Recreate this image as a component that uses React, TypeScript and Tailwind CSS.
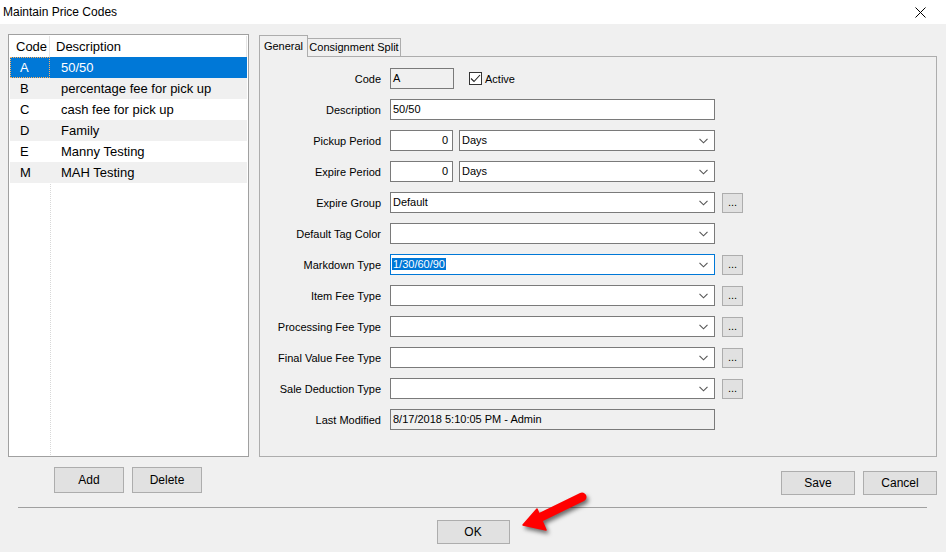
import React from "react";

const codes = [
    { code: "A", desc: "50/50" },
    { code: "B", desc: "percentage fee for pick up" },
    { code: "C", desc: "cash fee for pick up" },
    { code: "D", desc: "Family" },
    { code: "E", desc: "Manny Testing" },
    { code: "M", desc: "MAH Testing" },
];

function Chevron() {
    return (
        <svg width="9" height="6" viewBox="0 0 9 6" className="shrink-0">
            <polyline points="0.5,0.8 4.5,4.8 8.5,0.8" fill="none" stroke="#555" strokeWidth="1.1" />
        </svg>
    );
}

function Ellipsis() {
    return (
        <button className="ml-[7px] mt-[1px] w-[21px] h-[20px] bg-[#e1e1e1] border border-[#adadad] text-[11px] leading-none text-black flex items-end justify-center pb-[4px]">
            ...
        </button>
    );
}

function Select({ value, width = "w-[325px]", focused }: { value?: string; width?: string; focused?: boolean }) {
    return (
        <div className={`${width} h-[21px] bg-white border ${focused ? "border-[#0078d7]" : "border-[#7a7a7a]"} flex items-center pl-[1px] pr-[6px]`}>
            <div className="flex-1 min-w-0 truncate">
                {focused && value ? (
                    <span className="bg-[#0078d7] text-white px-[1px]">{value}</span>
                ) : (
                    <span className="px-[1px]">{value}</span>
                )}
            </div>
            <Chevron />
        </div>
    );
}

function Row({ label, children }: { label: string; children: React.ReactNode }) {
    return (
        <div className="flex items-start h-[21px]">
            <div className="w-[121px] h-[21px] flex items-center justify-end text-right whitespace-nowrap pt-[1px]">{label}</div>
            <div className="ml-[9px] flex items-start">{children}</div>
        </div>
    );
}

function Btn({ label, className }: { label: string; className: string }) {
    return (
        <button className={`bg-[#e1e1e1] border border-[#adadad] text-[12px] text-black flex items-center justify-center ${className}`}>
            {label}
        </button>
    );
}

export default function App() {
    return (
        <div className="relative w-[946px] h-[552px] overflow-hidden bg-[#f0f0f0] text-black font-['Liberation_Sans',Arial,sans-serif]">
            {/* ── Title bar ── */}
            <div className="h-[24px] bg-white flex items-center justify-between pl-[3px] pr-[20px]">
                <span className="text-[12px]">Maintain Price Codes</span>
                <svg width="11" height="11" viewBox="0 0 11 11">
                    <path d="M0.5 0.5 L10.5 10.5 M10.5 0.5 L0.5 10.5" stroke="#000" strokeWidth="1" />
                </svg>
            </div>

            {/* ── Main ── */}
            <div className="flex pt-[10px] pl-[8px]">
                {/* Code list */}
                <div className="w-[241px] h-[423px] bg-white border border-[#a0a0a0] p-[1px] flex flex-col text-[13px]">
                    <div className="h-[21px] flex items-center shrink-0">
                        <div className="w-[40px] h-full flex items-center pl-[6px] border-r border-[#e5e5e5]">Code</div>
                        <div className="flex-1 h-full flex items-center pl-[6px] border-r border-[#e5e5e5]">Description</div>
                    </div>
                    <div className="relative flex-1 flex flex-col">
                        <div className="absolute left-[40px] top-0 bottom-0 border-l border-dotted border-[#d8d8d8]" />
                        {codes.map((c, i) => {
                            const selected = i === 0;
                            const bg = selected ? "bg-[#0078d7] text-white" : i % 2 === 1 ? "bg-[#f0f0f0]" : "bg-white";
                            return (
                                <div key={c.code} className={`relative h-[21px] flex items-center ${bg}`}>
                                    <div className={`w-[40px] h-full flex items-center pl-[10px] ${selected ? "outline outline-1 outline-dotted outline-[#ffb060] -outline-offset-1" : ""}`}>
                                        {c.code}
                                    </div>
                                    <div className="pl-[11px]">{c.desc}</div>
                                </div>
                            );
                        })}
                    </div>
                </div>

                {/* Tabs */}
                <div className="ml-[10px] mt-[1px] w-[678px] flex flex-col">
                    <div className="h-[22px] flex items-end text-[11px] relative z-10">
                        <div className="h-[22px] w-[49px] border border-b-0 border-[#adadad] bg-[#f0f0f0] flex items-center justify-center pb-[1px]">
                            General
                        </div>
                        <div className="h-[19px] w-[93px] border border-l-0 border-[#adadad] bg-[#f0f0f0] flex items-center justify-center">
                            Consignment Split
                        </div>
                    </div>
                    <div className="-mt-[1px] h-[401px] border border-[#adadad] flex flex-col gap-[10px] pt-[11px] text-[11px]">
                        <Row label="Code">
                            <div className="w-[64px] h-[21px] border border-[#7a7a7a] bg-[#f0f0f0] flex items-center px-[2px]">A</div>
                            <div className="ml-[15px] h-[21px] flex items-center gap-[3px]">
                                <div className="w-[13px] h-[13px] border border-[#333] bg-white flex items-center justify-center">
                                    <svg width="11" height="9" viewBox="0 0 11 9">
                                        <polyline points="1,4.5 4,7.5 10,1" fill="none" stroke="#222" strokeWidth="1.1" />
                                    </svg>
                                </div>
                                <span className="pt-[1px]">Active</span>
                            </div>
                        </Row>
                        <Row label="Description">
                            <div className="w-[325px] h-[21px] border border-[#7a7a7a] bg-white flex items-center px-[2px]">50/50</div>
                        </Row>
                        <Row label="Pickup Period">
                            <div className="w-[63px] h-[21px] border border-[#7a7a7a] bg-white flex items-center justify-end px-[4px]">0</div>
                            <div className="ml-[6px]"><Select value="Days" width="w-[256px]" /></div>
                        </Row>
                        <Row label="Expire Period">
                            <div className="w-[63px] h-[21px] border border-[#7a7a7a] bg-white flex items-center justify-end px-[4px]">0</div>
                            <div className="ml-[6px]"><Select value="Days" width="w-[256px]" /></div>
                        </Row>
                        <Row label="Expire Group">
                            <Select value="Default" />
                            <Ellipsis />
                        </Row>
                        <Row label="Default Tag Color">
                            <Select />
                        </Row>
                        <Row label="Markdown Type">
                            <Select value="1/30/60/90" focused />
                            <Ellipsis />
                        </Row>
                        <Row label="Item Fee Type">
                            <Select />
                            <Ellipsis />
                        </Row>
                        <Row label="Processing Fee Type">
                            <Select />
                            <Ellipsis />
                        </Row>
                        <Row label="Final Value Fee Type">
                            <Select />
                            <Ellipsis />
                        </Row>
                        <Row label="Sale Deduction Type">
                            <Select />
                            <Ellipsis />
                        </Row>
                        <Row label="Last Modified">
                            <div className="w-[325px] h-[21px] border border-[#7a7a7a] bg-[#f0f0f0] flex items-center px-[2px]">
                                8/17/2018 5:10:05 PM - Admin
                            </div>
                        </Row>
                    </div>
                </div>
            </div>

            {/* ── Bottom buttons ── */}
            <div className="flex h-[38px]">
                <div className="pl-[54px] pt-[10px] flex gap-[8px] items-start">
                    <Btn label="Add" className="w-[70px] h-[26px]" />
                    <Btn label="Delete" className="w-[70px] h-[26px]" />
                </div>
                <div className="ml-auto pr-[9px] pt-[14px] flex gap-[8px] items-start">
                    <Btn label="Save" className="w-[74px] h-[24px]" />
                    <Btn label="Cancel" className="w-[74px] h-[24px]" />
                </div>
            </div>

            <div className="mt-[12px] mx-[18px] mr-[19px] border-t border-[#a0a0a0]" />

            <div className="mt-[12px] flex justify-center">
                <Btn label="OK" className="w-[73px] h-[24px]" />
            </div>

            {/* red annotation arrow */}
            <svg
                className="absolute left-[515px] top-[489px] drop-shadow-[2px_3px_2px_rgba(0,0,0,0.55)]"
                width="80"
                height="50"
                viewBox="0 0 80 50"
            >
                <line x1="26" y1="28" x2="67" y2="8" stroke="#f00" strokeWidth="9" strokeLinecap="round" />
                <polygon points="8,36 22,20 31,41" fill="#f00" stroke="#f00" strokeWidth="1.5" strokeLinejoin="round" />
            </svg>
        </div>
    );
}
